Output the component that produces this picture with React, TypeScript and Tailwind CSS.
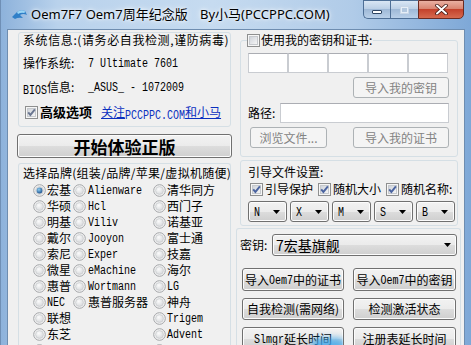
import React from 'react'

const face =
  'border border-[#707070] bg-[linear-gradient(#f2f2f2,#ebebeb_50%,#dddddd_50%,#cfcfcf)] shadow-[inset_0_0_0_1px_#fcfcfc]'

const M: React.FC<{ children: React.ReactNode }> = ({ children }) => (
  <span className="inline-block translate-y-[1.5px] scale-y-[1.2] font-['Liberation_Mono',monospace] text-[10px] leading-none">
    {children}
  </span>
)

const Check: React.FC<{ checked?: boolean; tone?: string }> = ({ checked, tone = '#4b64a0' }) => (
  <svg width="13" height="13" viewBox="0 0 13 13" className="shrink-0">
    <defs>
      <linearGradient id="cbg" x1="0" y1="0" x2="1" y2="1">
        <stop offset="0" stopColor="#cdd1d8" />
        <stop offset="1" stopColor="#f7f7f7" />
      </linearGradient>
    </defs>
    <rect x="0.5" y="0.5" width="12" height="12" fill="#f6f6f6" stroke="#8e8f8f" />
    <rect x="2.5" y="2.5" width="8" height="8" fill="url(#cbg)" stroke="#c6c9cd" />
    {checked && <path d="M3.2 6.3 L5.4 8.9 L9.9 3.4" fill="none" stroke={tone} strokeWidth="1.9" />}
  </svg>
)

const Radio: React.FC<{ on?: boolean }> = ({ on }) => (
  <svg width="13" height="13" viewBox="0 0 13 13" className="shrink-0">
    <defs>
      <radialGradient id="rbg" cx="0.4" cy="0.35" r="0.7">
        <stop offset="0" stopColor="#fbfbfb" />
        <stop offset="1" stopColor="#d6d8db" />
      </radialGradient>
      <radialGradient id="ron" cx="0.4" cy="0.35" r="0.7">
        <stop offset="0" stopColor="#8fcff2" />
        <stop offset="1" stopColor="#1b4f8c" />
      </radialGradient>
    </defs>
    <circle cx="6.5" cy="6.5" r="5.8" fill="#f3f3f3" stroke="#a3a5a8" />
    <circle cx="6.5" cy="6.5" r="3.9" fill="url(#rbg)" stroke="#c9cbce" strokeWidth="0.8" />
    {on && <circle cx="6.5" cy="6.5" r="2.9" fill="url(#ron)" />}
  </svg>
)

const Arrow = () => (
  <svg width="7" height="4" viewBox="0 0 7 4" className="shrink-0">
    <path d="M0 0 H7 L3.5 4 Z" fill="#000" />
  </svg>
)

const Btn: React.FC<{ className?: string; disabled?: boolean; children: React.ReactNode }> = ({
  className,
  disabled,
  children,
}) => (
  <button
    className={`relative flex items-center justify-center overflow-hidden rounded-[3px] leading-none ${
      disabled ? 'border border-[#adb2b5] bg-[#f4f4f4] text-[#838383]' : `${face} text-black`
    } ${className ?? ''}`}
  >
    {children}
  </button>
)

const Combo: React.FC<{ v: string }> = ({ v }) => (
  <div className={`flex h-[21px] w-[39px] items-center justify-between rounded-[3px] pl-[5px] pr-[6px] ${face}`}>
    <M>{v}</M>
    <Arrow />
  </div>
)

const AppIcon = () => (
  <svg width="15" height="12" viewBox="0 0 15 12" className="shrink-0">
    <path d="M0 8 L5 3 Q9 0 13 2 L15 6 Q11 4 8 6 L11 9 Q6 8 3 10 Z" fill="#2f7fc8" />
    <path d="M5 3 Q9 0 13 2 L12.5 4 Q9 3 6 5 Z" fill="#9ad6f6" />
  </svg>
)

// the last row is cut off by the window bottom: radios only
const brands: [string | null, string | null, string | null, boolean?][] = [
  ['宏基', 'Alienware', '清华同方', true],
  ['华硕', 'Hcl', '西门子'],
  ['明基', 'Viliv', '诺基亚'],
  ['戴尔', 'Jooyon', '富士通'],
  ['索尼', 'Exper', '技嘉'],
  ['微星', 'eMachine', '海尔'],
  ['惠普', 'Wortmann', 'LG'],
  ['NEC', '惠普服务器', '神舟'],
  ['联想', null, 'Trigem'],
  ['东芝', null, 'Advent'],
  ['', null, ''],
]

const isLatin = (s: string) => /^[A-Za-z0-9 ]+$/.test(s)
const Label: React.FC<{ s: string }> = ({ s }) => (s === '' ? null : isLatin(s) ? <M>{s}</M> : <span>{s}</span>)

export default function App() {
  return (
    <div className="flex h-[345px] w-[471px] flex-col overflow-hidden border-l border-[#6f8fb5] bg-[linear-gradient(90deg,#8db2db,#b9d2ec_12%,#c6dbf0_45%,#b0cbe8_75%,#7ea8d7)] font-['Noto_Sans_CJK_SC',sans-serif] text-[12px] text-black">
      {/* title bar */}
      <div className="flex h-[29px] shrink-0">
        <div className="flex h-[29px] items-center pl-[11px] font-['Noto_Sans','Noto_Sans_CJK_SC',sans-serif] text-[13px] [text-shadow:0_0_6px_#fff,0_0_3px_#fff]">
          <AppIcon />
          <span className="ml-[4px] w-[169px] whitespace-nowrap">Oem7F7 Oem7周年纪念版</span>
          <span className="whitespace-nowrap">By小马(PCCPPC.COM)</span>
        </div>
        <div className="ml-auto mr-[7px] flex h-[19px]">
          <div className="flex w-[27px] items-center justify-center rounded-bl-[5px] border border-r-0 border-[#4e6f96] bg-[linear-gradient(#d9e6f4,#bcd0e6_45%,#9fb9d7_50%,#b9d0e9)]">
            <div className="mt-[5px] h-[4px] w-[10px] rounded-[1px] border border-[#2e4563] bg-white" />
          </div>
          <div className="flex w-[28px] items-center justify-center border border-r-0 border-[#4e6f96] bg-[linear-gradient(#d9e6f4,#bcd0e6_45%,#9fb9d7_50%,#b9d0e9)]">
            <div className="h-[8px] w-[9px] border border-[#c9d7e7] bg-[#b3c8df] shadow-[inset_0_0_0_1px_#e6eef7]" />
          </div>
          <div className="flex w-[46px] items-center justify-center rounded-br-[5px] border border-[#6b2b22] bg-[linear-gradient(#eab0a2,#d98572_45%,#c4422c_50%,#d66a4f)]">
            <svg width="13" height="11" viewBox="0 0 13 11">
              <path d="M2 1.5 L11 9.5 M11 1.5 L2 9.5" stroke="#3d1510" strokeWidth="3.6" strokeLinecap="round" />
              <path d="M2 1.5 L11 9.5 M11 1.5 L2 9.5" stroke="#fff" strokeWidth="2" strokeLinecap="round" />
            </svg>
          </div>
        </div>
      </div>

      {/* client area */}
      <div className="ml-[6px] mr-[6px] flex flex-1 border-l border-r border-t border-[#6e8db0] bg-[#f0f0f0]">
        {/* left column */}
        <div className="ml-[10px] flex w-[213px] flex-col">
          <div className="mt-[2px] flex h-[95px] flex-col rounded-[3px] border border-[#d5dfe5] pl-[4px]">
            <div className="flex h-[14px] items-center whitespace-nowrap tracking-[0.6px]">
              系统信息:(请务必自我检测,谨防病毒)
            </div>
            <div className="mt-[4px] flex h-[24px] items-center">
              <span className="w-[65px]">操作系统:</span>
              <M>7 Ultimate 7601</M>
            </div>
            <div className="flex h-[24px] items-center">
              <span className="w-[65px]">
                <M>BIOS</M>信息:
              </span>
              <M>_ASUS_ - 1072009</M>
            </div>
            <div className="mt-[1px] flex h-[24px] items-center">
              <span className="ml-[2px]">
                <Check checked tone="#6a7690" />
              </span>
              <span className="ml-[2px] text-[13px] font-bold">高级选项</span>
              <span className="ml-[9px] text-[#0a2fbf] underline decoration-[#0a2fbf]">
                关注<M>PCCPPC.COM</M>和小马
              </span>
            </div>
          </div>

          <Btn className="-ml-[1px] mt-[7px] h-[24px] w-[215px] text-[17px] font-bold">开始体验正版</Btn>

          <div className="mt-[5px] flex flex-1 flex-col rounded-t-[3px] border border-b-0 border-[#d5dfe5]">
            <div className="ml-[4px] mt-[1px] flex h-[16px] items-center whitespace-nowrap tracking-[0.3px]">
              选择品牌(组装/品牌/苹果/虚拟机随便)
            </div>
            <div className="mt-[1px] flex flex-col pl-[14px]">
              {brands.map(([a, b, c, on], i) => (
                <div key={i} className="flex h-[16px] items-center">
                  <div className="flex w-[39px] items-center gap-[1px]">
                    {a !== null && (
                      <>
                        <Radio on={on} />
                        <Label s={a} />
                      </>
                    )}
                  </div>
                  <div className="flex w-[80px] items-center gap-[2px] pl-[1px]">
                    {b !== null && (
                      <>
                        <Radio />
                        <Label s={b} />
                      </>
                    )}
                  </div>
                  <div className="flex items-center gap-[1px] pl-[1px]">
                    {c !== null && (
                      <>
                        <Radio />
                        <Label s={c} />
                      </>
                    )}
                  </div>
                </div>
              ))}
            </div>
          </div>
        </div>

        {/* right column */}
        <div className="ml-[5px] flex w-[225px] flex-col">
          <fieldset className="ml-[4px] mr-[3px] mt-[3px] flex flex-col rounded-[3px] border border-[#d5dfe5] pb-[8px]">
            <legend className="ml-[6px]">
              <span className="flex h-[14px] items-center gap-[1px] pr-[1px]">
                <Check />
                使用我的密钥和证书:
              </span>
            </legend>
            <div className="ml-[7px] mt-[6px] flex">
              {[0, 1, 2, 3, 4].map((k) => (
                <div key={k} className="h-[20px] w-[40px] border border-[#c9ccd1] border-t-[#abadb3] bg-white" />
              ))}
            </div>
            <div className="mr-[8px] mt-[4px] flex justify-end">
              <Btn disabled className="h-[21px] w-[96px]">
                导入我的密钥
              </Btn>
            </div>
            <div className="ml-[7px] mt-[5px] flex h-[20px] items-center">
              <span className="w-[32px]">路径:</span>
              <div className="h-[20px] w-[169px] border border-[#c9ccd1] border-t-[#abadb3] bg-white" />
            </div>
            <div className="mt-[4px] flex">
              <Btn disabled className="ml-[9px] h-[21px] w-[77px]">
                浏览文件...
              </Btn>
              <Btn disabled className="ml-[26px] h-[21px] w-[96px]">
                导入我的证书
              </Btn>
            </div>
          </fieldset>

          <div className="ml-[4px] mr-[3px] mt-[3px] flex h-[66px] flex-col rounded-[3px] border border-[#d5dfe5]">
            <div className="ml-[7px] mt-[3px] flex h-[16px] items-center">引导文件设置:</div>
            <div className="ml-[9px] mt-[1px] flex h-[16px] items-center whitespace-nowrap">
              <Check checked />
              <span className="ml-[2px] w-[53px]">引导保护</span>
              <Check checked />
              <span className="ml-[2px] w-[53px]">随机大小</span>
              <Check checked />
              <span className="ml-[2px]">随机名称:</span>
            </div>
            <div className="ml-[7px] mt-[4px] flex gap-[3px]">
              {['N', 'X', 'M', 'S', 'B'].map((v) => (
                <Combo key={v} v={v} />
              ))}
            </div>
          </div>

          <div className="mt-[2px] flex flex-1 flex-col rounded-t-[3px] border border-b-0 border-[#d5dfe5]">
            <div className="ml-[3px] mt-[5px] flex h-[22px] items-center">
              <span className="w-[32px]">密钥:</span>
              <div className={`flex h-[22px] w-[185px] items-center justify-between rounded-[3px] pl-[3px] pr-[5px] ${face}`}>
                <span className="text-[14px] leading-none">7宏基旗舰</span>
                <Arrow />
              </div>
            </div>
            <div className="ml-[5px] mt-[12px] flex gap-[9px]">
              <Btn className="h-[23px] w-[102px]">
                导入<M>Oem7</M>中的证书
              </Btn>
              <Btn className="h-[23px] w-[103px]">
                导入<M>Oem7</M>中的密钥
              </Btn>
            </div>
            <div className="ml-[5px] mt-[7px] flex gap-[9px]">
              <Btn className="h-[22px] w-[102px]">自我检测(需网络)</Btn>
              <Btn className="h-[22px] w-[103px]">检测激活状态</Btn>
            </div>
            <div className="ml-[5px] mt-[7px] flex gap-[9px]">
              <Btn className="h-[23px] w-[102px]">
                <M>Slmgr</M>延长时间
                <span className="absolute left-[68px] top-[10px] h-[14px] w-[34px] rounded-full bg-[#3fa9ee] opacity-80 blur-[3px]" />
              </Btn>
              <Btn className="h-[23px] w-[103px]">注册表延长时间</Btn>
            </div>
          </div>
        </div>
      </div>
    </div>
  )
}
